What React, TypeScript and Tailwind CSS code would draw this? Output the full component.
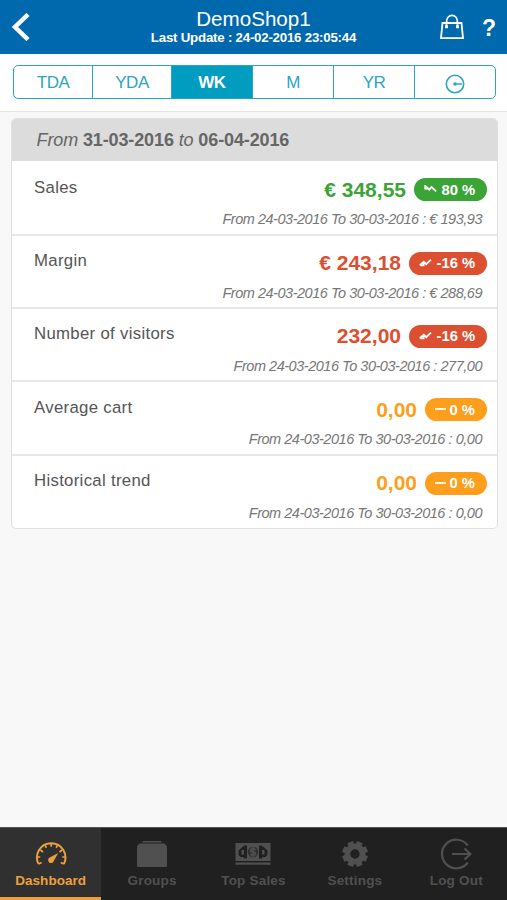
import type { ReactNode } from "react";

type Tone = "up" | "down" | "flat";

type Metric = {
  label: string;
  value: string;
  change: string;
  previous: string;
  tone: Tone;
};

const metrics: Metric[] = [
  { label: "Sales", value: "€ 348,55", change: "80 %", previous: "€ 193,93", tone: "up" },
  { label: "Margin", value: "€ 243,18", change: "-16 %", previous: "€ 288,69", tone: "down" },
  { label: "Number of visitors", value: "232,00", change: "-16 %", previous: "277,00", tone: "down" },
  { label: "Average cart", value: "0,00", change: "0 %", previous: "0,00", tone: "flat" },
  { label: "Historical trend", value: "0,00", change: "0 %", previous: "0,00", tone: "flat" },
];

const textTone = {
  up: "text-[#3ba437]",
  down: "text-[#dc4f31]",
  flat: "text-[#fd9f1c]",
};

const badgeTone = {
  up: "bg-[#3ba437] w-[73px] gap-[5px]",
  down: "bg-[#dc4f31] w-[78px] gap-[5px]",
  flat: "bg-[#fd9f1c] w-[62px] gap-[2px]",
};

function TrendIcon({ tone }: { tone: Tone }) {
  return (
    <svg
      width="13"
      height="10"
      viewBox="0 0 13 10"
      fill="none"
      stroke="currentColor"
      strokeWidth="1.8"
      className="mb-px shrink-0"
    >
      {tone === "up" && <path d="M1.2 1v3.6h3M1.2 1.6l4 4L7.6 3l4.6 4.4" />}
      {tone === "down" && <path d="M1.2 7.4h3.4V4.6M.8 7.2 4.8 3.8l2.4 2.4L12 1.6" />}
      {tone === "flat" && <path d="M0 5h11" />}
    </svg>
  );
}

function MetricRow({ metric }: { metric: Metric }) {
  return (
    <div className="h-[73.4px] border-t-2 border-[#e8e8e8] pr-[10px] pl-[22px] first:h-[72.6px] first:border-t-0 first:pt-px">
      <div className="flex h-[44px] justify-between pt-[13px]">
        <span className="pt-[1.5px] text-[16.8px] leading-[22px] tracking-[0.3px] text-[#555]">
          {metric.label}
        </span>
        <div className="flex h-[29px] items-center gap-2">
          <span className={`text-[21px] leading-[28px] font-bold ${textTone[metric.tone]}`}>
            {metric.value}
          </span>
          <span
            className={`flex h-[23px] items-center rounded-full pl-[9.5px] text-[14.8px] leading-[23px] font-bold whitespace-nowrap text-white ${badgeTone[metric.tone]}`}
          >
            <TrendIcon tone={metric.tone} />
            <span className="pt-px">{metric.change}</span>
          </span>
        </div>
      </div>
      <p className="pr-[5px] text-right text-[14.5px] leading-[26px] tracking-[-0.47px] text-[#777] italic">
        From 24-03-2016 To 30-03-2016 : {metric.previous}
      </p>
    </div>
  );
}

function GaugeIcon() {
  return (
    <svg width="34" height="28" viewBox="0 0 34 28" fill="none" stroke="currentColor" strokeWidth="2">
      <path d="M4.6 24a14.2 14.2 0 1 1 25.2 0" />
      <path
        strokeWidth="1.7"
        d="m4.6 24 3-1.6M29.8 24l-3-1.6M3 17h3.2M31.5 17h-3.2M6.5 10l2.5 2M28 10l-2.5 2M11 5l1.3 2.8M23.5 5l-1.3 2.8M17.2 3.5v3.2"
      />
      <path fill="currentColor" stroke="none" d="m24.2 13-4.4 7.9a2.9 2.9 0 1 1-3.6-3.6z" />
    </svg>
  );
}

function GroupsIcon() {
  return (
    <svg width="32" height="28" viewBox="0 0 32 28" fill="currentColor">
      <path d="M7 1h18l1 1.6H6zM3.5 3.4h25L31 6v20q0 1-1 1H2q-1 0-1-1V6z" />
    </svg>
  );
}

function SalesIcon() {
  return (
    <svg width="36" height="24" viewBox="0 0 36 24" fill="currentColor">
      <path d="M.5 1h35v18H.5z" />
      <path
        className="text-[#202020]"
        d="M12 3.5v13H9.5L8 15H5.5l-2-2.500v-4L8 4.500l1.500-1zM24 3.500v13h2.500L28 15h2.500l2-2.500v-4L28 4.500l-1.500-1z"
      />
      <path d="M6.500 8H9v4.500H6.500zM27 8h2.500v4.500H27z" />
      <circle cx="18" cy="10" r="5.2" className="text-[#303030]" />
      <path
        fill="none"
        stroke="currentColor"
        strokeWidth="1.6"
        d="M20.5 8q-.8-1.3-2.5-1.3c-3.3 0-3.3 3.3 0 3.3s3.3 3.3 0 3.3q-1.7 0-2.5-1.3M18 5v10"
      />
      <path d="M.5 20.5h35v2.3H.5z" />
    </svg>
  );
}

function GearIcon() {
  return (
    <svg width="28" height="28" viewBox="0 0 28 28" fill="none" stroke="currentColor">
      <circle cx="14" cy="14" r="7.6" strokeWidth="5.8" />
      {[22.5, 67.5, 112.5, 157.5].map((angle) => (
        <path
          key={angle}
          strokeWidth="6"
          d="M14 1.2v4M14 22.8v4"
          transform={`rotate(${angle} 14 14)`}
        />
      ))}
    </svg>
  );
}

function LogOutIcon() {
  return (
    <svg width="32" height="32" viewBox="0 0 32 32" fill="none" stroke="currentColor" strokeWidth="2.2">
      <path d="M27.8 7.5a14.3 14.3 0 1 0 0 17" />
      <path d="M12 16h18M24.5 10.5l6 5.5-6 5.5" />
    </svg>
  );
}

function BagIcon() {
  return (
    <svg width="26" height="26" viewBox="0 0 26 26" fill="none" stroke="currentColor">
      <path strokeWidth="1.8" d="M3.5 9h19L24 24.200H2z" />
      <path strokeWidth="1.7" d="M7.500 13V8.500C7.500-1 18.500-1 18.500 8.500V13" />
      <path fill="currentColor" stroke="none" d="M6 11.200h3v3H6zM17 11.200h3v3h-3z" />
    </svg>
  );
}

function ClockIcon() {
  return (
    <svg width="20" height="20" viewBox="0 0 20 20" fill="none" stroke="currentColor" className="mt-[2px] mr-px">
      <circle cx="10" cy="10" r="8.7" strokeWidth="1.6" />
      <path strokeWidth="1.5" d="M9 10h8" />
      <circle cx="10" cy="10" r="1.8" fill="currentColor" stroke="none" />
    </svg>
  );
}

const periods: { label: ReactNode; name: string; width: string }[] = [
  { name: "TDA", label: "TDA", width: "w-[78px]" },
  { name: "YDA", label: "YDA", width: "w-[79px]" },
  { name: "WK", label: "WK", width: "w-[81px]" },
  { name: "M", label: "M", width: "w-[81px]" },
  { name: "YR", label: "YR", width: "w-[81px]" },
  { name: "clock", label: <ClockIcon />, width: "w-[81px]" },
];

const tabs = [
  { label: "Dashboard", icon: <GaugeIcon /> },
  { label: "Groups", icon: <GroupsIcon /> },
  { label: "Top Sales", icon: <SalesIcon /> },
  { label: "Settings", icon: <GearIcon /> },
  { label: "Log Out", icon: <LogOutIcon /> },
];

export default function App() {
  return (
    <div className="flex h-[900px] w-[507px] flex-col overflow-hidden bg-[#f8f8f8] font-['Liberation_Sans',Arial,sans-serif]">
      <header className="flex h-[54px] shrink-0 items-center bg-[#0068ac] text-white">
        <button aria-label="Back" className="w-[80px] pl-[11px]">
          <svg width="20" height="28" viewBox="0 0 20 28" fill="none" stroke="currentColor" strokeWidth="4.5">
            <path d="M17 1.5 4 14l13 12.5" />
          </svg>
        </button>
        <div className="flex-1 text-center">
          <h1 className="text-[20.6px] leading-[21px]">DemoShop1</h1>
          <p className="text-[13.3px] leading-[17px] font-bold tracking-[-0.23px]">
            Last Update : 24-02-2016 23:05:44
          </p>
        </div>
        <div className="flex w-[80px] items-center gap-[17px] pl-[12px]">
          <BagIcon />
          <span className="pt-[2px] text-[23px] leading-[26px] font-bold">?</span>
        </div>
      </header>

      <nav className="h-[58px] shrink-0 border-b border-[#e5e7e5] bg-white pt-[11px] pl-[13px]">
        <div className="flex h-[34px] w-[483px] overflow-hidden rounded-[5px] border border-[#2ba5c4]">
          {periods.map((period) => (
            <button
              key={period.name}
              className={`flex items-center justify-center border-l border-[#2ba5c4] pt-[2px] text-[17px] tracking-[-0.5px] first:border-l-0 ${period.width} ${
                period.name === "WK" ? "bg-[#009dc1] font-bold text-white" : "text-[#2ba5c4]"
              }`}
            >
              {period.label}
            </button>
          ))}
        </div>
      </nav>

      <main className="flex-1 pt-[6px] pr-[9px] pl-[11px]">
        <section className="overflow-hidden rounded-[5px] border border-[#e0e0e0] bg-white">
          <h2 className="h-[42px] bg-[#dcdcdc] pl-[24.5px] text-[18px] leading-[42px] tracking-[-0.12px] text-[#666]">
            <em>From</em> <b>31-03-2016</b> <em>to</em> <b>06-04-2016</b>
          </h2>
          <div className="pb-px">
            {metrics.map((metric) => (
              <MetricRow key={metric.label} metric={metric} />
            ))}
          </div>
        </section>
      </main>

      <footer className="grid h-[73px] shrink-0 grid-cols-5 border-t border-[#555] bg-[#202020]">
        {tabs.map((tab, i) => (
          <button
            key={tab.label}
            className={`flex flex-col items-center pt-[9px] text-[13.5px] font-bold ${
              i === 0
                ? "border-b-[3px] border-[#eca03b] bg-[#303030] tracking-[0.05px] text-[#eca03b]"
                : "tracking-[0.2px] text-[#505050]"
            }`}
          >
            <span className="flex h-[34px] items-center justify-center">{tab.icon}</span>
            <span className="leading-[20px]">{tab.label}</span>
          </button>
        ))}
      </footer>
    </div>
  );
}
